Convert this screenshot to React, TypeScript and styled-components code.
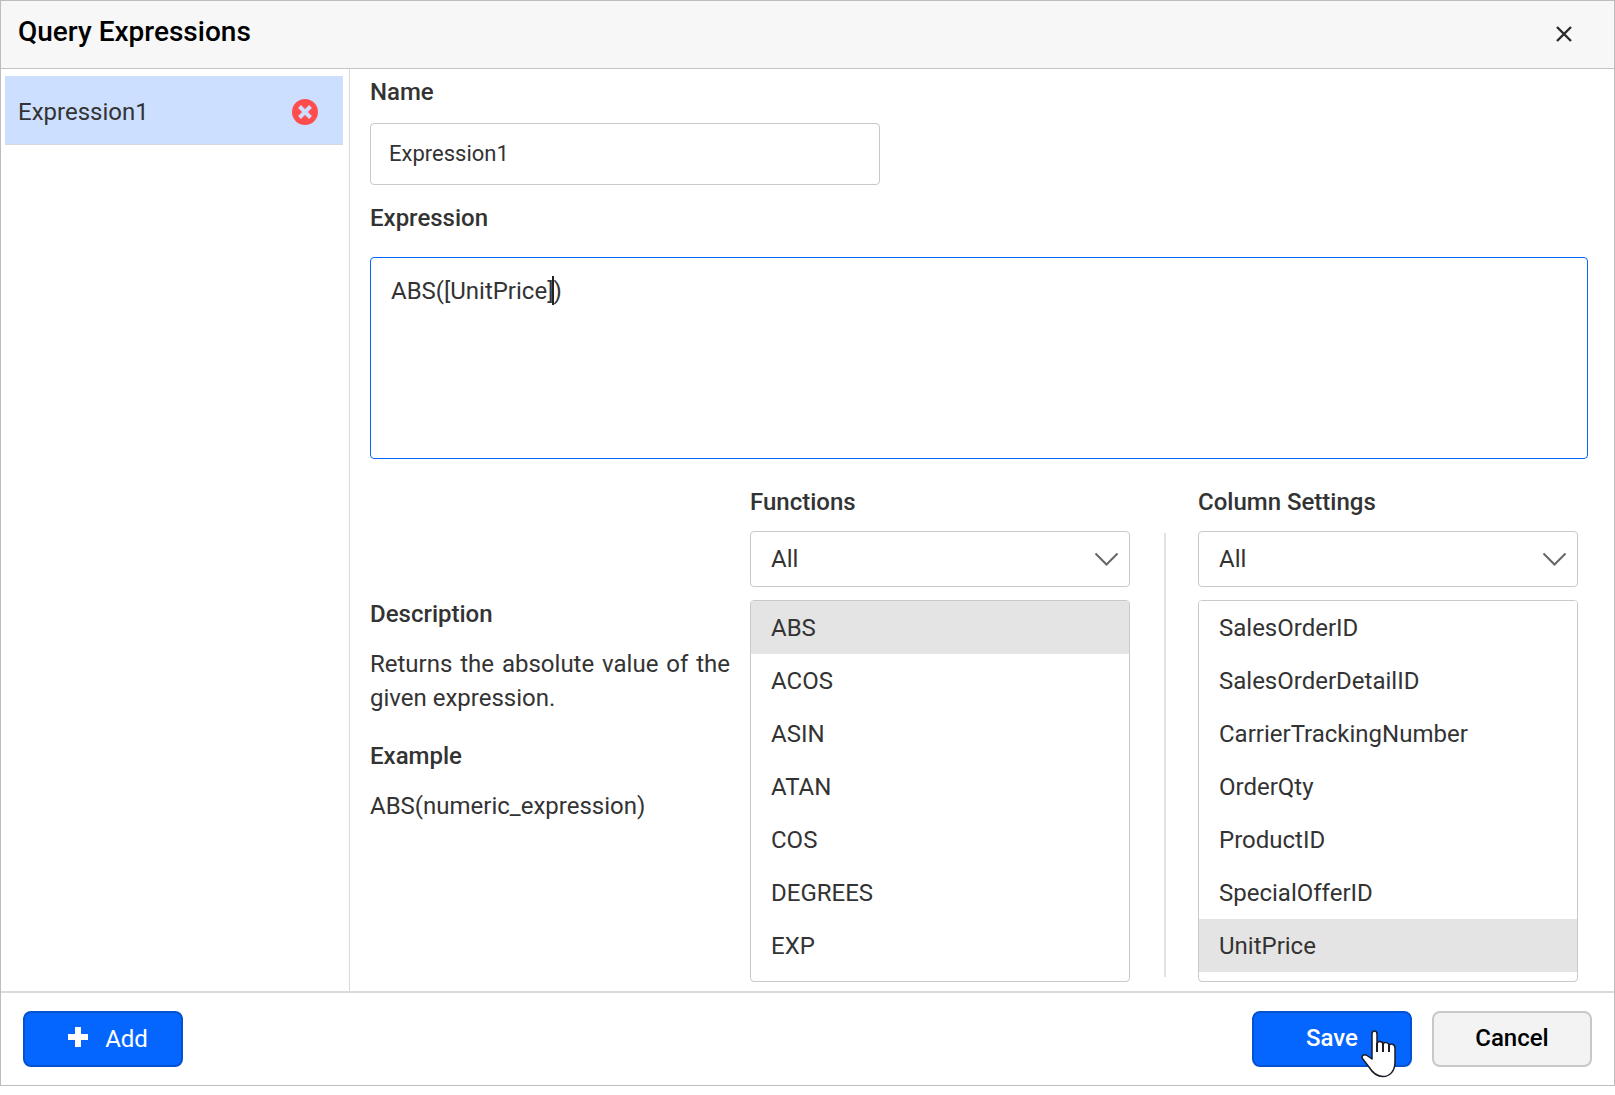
import React, { useState } from "react";
import styled, { createGlobalStyle, css } from "styled-components";

const GlobalStyle = createGlobalStyle`
  *, *::before, *::after { box-sizing: border-box; }
  body { margin: 0; background: #ffffff; }
  body, button, input, select, textarea { font-family: Roboto, "Liberation Sans", sans-serif; }
`;

const line = "#c9c9c9";
const ink = "#333333";

const Dialog = styled.form`
  border: 1px solid #bdbdbd;
  background: #ffffff;
  color: ${ink};
  font-size: 24px;
  line-height: 34px;
`;

const Header = styled.header`
  display: flex;
  align-items: center;
  justify-content: space-between;
  height: 68px;
  padding: 0 40px 2px 17px;
  border-bottom: 1px solid #c4c4c4;
  background: #f7f7f7;
`;

const Title = styled.h1`
  margin: 0;
  padding-bottom: 4px;
  color: #000000;
  font-size: 28px;
  font-weight: 500;
`;

const IconButton = styled.button`
  display: flex;
  padding: 0;
  border: 0;
  background: none;
  cursor: pointer;
`;

const Body = styled.div`
  display: flex;
`;

const Sidebar = styled.ul`
  flex: 0 0 349px;
  margin: 0;
  padding: 7px 6px 0 4px;
  border-right: 1px solid #dadada;
  list-style: none;
`;

const SidebarItem = styled.li`
  display: flex;
  align-items: center;
  justify-content: space-between;
  height: 69px;
  padding: 3px 25px 0 13px;
  border-bottom: 1px solid #d5d8de;
  background: #cddfff;
`;

const Main = styled.main`
  flex: 1;
  min-width: 0;
  padding: 6px 26px 9px 20px;
`;

const Label = styled.label`
  display: block;
  font-weight: 500;
`;

const Heading = styled.h2`
  margin: 0;
  font-size: 24px;
  font-weight: 500;
`;

const NameInput = styled.input`
  display: block;
  width: 510px;
  max-width: 100%;
  height: 62px;
  margin: 14px 0 16px;
  padding: 0 18px 2px;
  border: 1px solid ${line};
  border-radius: 4px;
  outline: 0;
  color: ${ink};
  font-size: 22px;
`;

const Editor = styled.div`
  position: relative;
  margin: 22px 0 26px;
`;

const ExpressionArea = styled.textarea`
  display: block;
  width: 100%;
  height: 202px;
  padding: 16px 20px;
  border: 1px solid #0565ff;
  border-radius: 4px;
  outline: 0;
  resize: none;
  color: ${ink};
  font-size: 24px;
  line-height: 34px;
`;

const Caret = styled.span`
  position: absolute;
  top: 19px;
  left: 182px;
  width: 2px;
  height: 29px;
  background: #222222;
`;

const Columns = styled.div`
  display: grid;
  grid-template-columns: 1fr 1fr auto 1fr;
  padding-right: 10px;
`;

const Details = styled.section`
  padding: 112px 20px 0 0;
`;

const Text = styled.p`
  margin: 16px 0 24px;
  text-align: justify;
`;

const Divider = styled.div`
  width: 2px;
  margin: 48px 32px 5px 34px;
  background: #e2e2e2;
`;

const SelectBox = styled.div`
  position: relative;
  margin: 12px 0 13px;

  svg {
    position: absolute;
    top: 21px;
    right: 11px;
    pointer-events: none;
  }
`;

const Select = styled.select`
  display: block;
  width: 100%;
  height: 56px;
  padding: 0 48px 0 20px;
  border: 1px solid ${line};
  border-radius: 4px;
  outline: 0;
  appearance: none;
  background: #ffffff;
  color: ${ink};
  font-size: 24px;
`;

const List = styled.ul`
  height: 382px;
  margin: 0;
  padding: 0;
  border: 1px solid ${line};
  border-radius: 4px;
  overflow: hidden;
  list-style: none;
`;

const Option = styled.button<{ $selected: boolean }>`
  display: block;
  width: 100%;
  height: 53px;
  padding: 0 20px;
  border: 0;
  background: ${(p) => (p.$selected ? "#e4e4e4" : "#ffffff")};
  color: ${ink};
  font-size: 24px;
  line-height: 34px;
  text-align: left;
  cursor: pointer;
`;

const Footer = styled.footer`
  display: flex;
  gap: 20px;
  padding: 18px 22px;
  border-top: 2px solid #dadada;
`;

const Button = styled.button<{ $primary?: boolean }>`
  position: relative;
  display: flex;
  align-items: center;
  justify-content: center;
  gap: 17px;
  width: 160px;
  height: 56px;
  padding: 0 0 2px;
  border: 2px solid #c8c8c8;
  border-radius: 8px;
  background: #f3f3f3;
  color: #000000;
  font-size: 24px;
  font-weight: 500;
  cursor: pointer;

  ${(p) =>
    p.$primary &&
    css`
      border-color: #0552d0;
      background: #0565ff;
      color: #ffffff;
    `}
`;

const AddButton = styled(Button)`
  margin-right: auto;
  padding: 0 0 0 10px;
  font-weight: 400;
`;

const PlusIcon = styled.svg`
  margin-bottom: 4px;
`;

const Pointer = styled.svg`
  position: absolute;
  top: 17px;
  left: 107px;
  pointer-events: none;
`;

const Chevron = () => (
  <svg width="25" height="15" viewBox="0 0 25 15" fill="none" stroke="#666666" strokeWidth="2" aria-hidden="true">
    <path d="M1.5 1.5 L12.5 12.5 L23.5 1.5" />
  </svg>
);

const HandPointer = () => (
  <Pointer width="36" height="48" viewBox="0 0 36 48" aria-hidden="true">
    <path
      d="M11 29 V4 C11 0 16 0 16 4 V14 C16 10.500 22 10.500 22 14.500 C23 11.500 28 12 28 16 C29 13 34 13.500 34 18 V32 C34 41 29 46.500 22 46.500 C15 46.500 11 42 8 37 L1.800 29 C-.5 26 3 23.500 6 25.500 Z"
      fill="#ffffff"
      stroke="#1b1b2b"
      strokeWidth="1.500"
      strokeLinejoin="round"
    />
    <path d="M16 13 V22 M22 14 V22 M28 15.500 V22" stroke="#1b1b2b" strokeWidth="2" fill="none" />
  </Pointer>
);

const functionNames = ["ABS", "ACOS", "ASIN", "ATAN", "COS", "DEGREES", "EXP"];
const columnNames = [
  "SalesOrderID",
  "SalesOrderDetailID",
  "CarrierTrackingNumber",
  "OrderQty",
  "ProductID",
  "SpecialOfferID",
  "UnitPrice",
];

type PickerProps = { id: string; label: string; items: string[]; initial: string };

function Picker({ id, label, items, initial }: PickerProps) {
  const [selected, setSelected] = useState(initial);
  return (
    <section>
      <Label htmlFor={id}>{label}</Label>
      <SelectBox>
        <Select id={id} defaultValue="All">
          <option>All</option>
        </Select>
        <Chevron />
      </SelectBox>
      <List>
        {items.map((item) => (
          <li key={item}>
            <Option
              type="button"
              $selected={item === selected}
              aria-pressed={item === selected}
              onClick={() => setSelected(item)}
            >
              {item}
            </Option>
          </li>
        ))}
      </List>
    </section>
  );
}

export default function App() {
  const [name, setName] = useState("Expression1");
  return (
    <>
      <GlobalStyle />
      <Dialog onSubmit={(e) => e.preventDefault()}>
        <Header>
          <Title>Query Expressions</Title>
          <IconButton type="button" aria-label="Close">
            <svg width="20" height="20" viewBox="0 0 20 20" stroke="#2b2b2b" strokeWidth="2.400">
              <path d="M3 3 L17 17 M17 3 L3 17" />
            </svg>
          </IconButton>
        </Header>
        <Body>
          <Sidebar>
            <SidebarItem>
              <span>{name}</span>
              <IconButton type="button" aria-label="Delete expression">
                <svg width="26" height="26" viewBox="0 0 26 26">
                  <circle cx="13" cy="13" r="13" fill="#ff4d4d" />
                  <path d="M7.500 7.500 L18.500 18.500 M18.500 7.500 L7.500 18.500" stroke="#cddfff" strokeWidth="4" />
                </svg>
              </IconButton>
            </SidebarItem>
          </Sidebar>
          <Main>
            <Label htmlFor="name">Name</Label>
            <NameInput id="name" value={name} onChange={(e) => setName(e.target.value)} />
            <Label htmlFor="expression">Expression</Label>
            <Editor>
              <ExpressionArea id="expression" defaultValue="ABS([UnitPrice])" spellCheck={false} />
              <Caret />
            </Editor>
            <Columns>
              <Details>
                <Heading>Description</Heading>
                <Text>Returns the absolute value of the given expression.</Text>
                <Heading>Example</Heading>
                <Text>ABS(numeric_expression)</Text>
              </Details>
              <Picker id="functions" label="Functions" items={functionNames} initial="ABS" />
              <Divider />
              <Picker id="columns" label="Column Settings" items={columnNames} initial="UnitPrice" />
            </Columns>
          </Main>
        </Body>
        <Footer>
          <AddButton type="button" $primary>
            <PlusIcon width="20" height="20" viewBox="0 0 20 20" fill="#ffffff" aria-hidden="true">
              <path d="M7 0 H13 V7 H20 V13 H13 V20 H7 V13 H0 V7 H7 Z" />
            </PlusIcon>
            Add
          </AddButton>
          <Button type="submit" $primary>
            Save
            <HandPointer />
          </Button>
          <Button type="button">Cancel</Button>
        </Footer>
      </Dialog>
    </>
  );
}
